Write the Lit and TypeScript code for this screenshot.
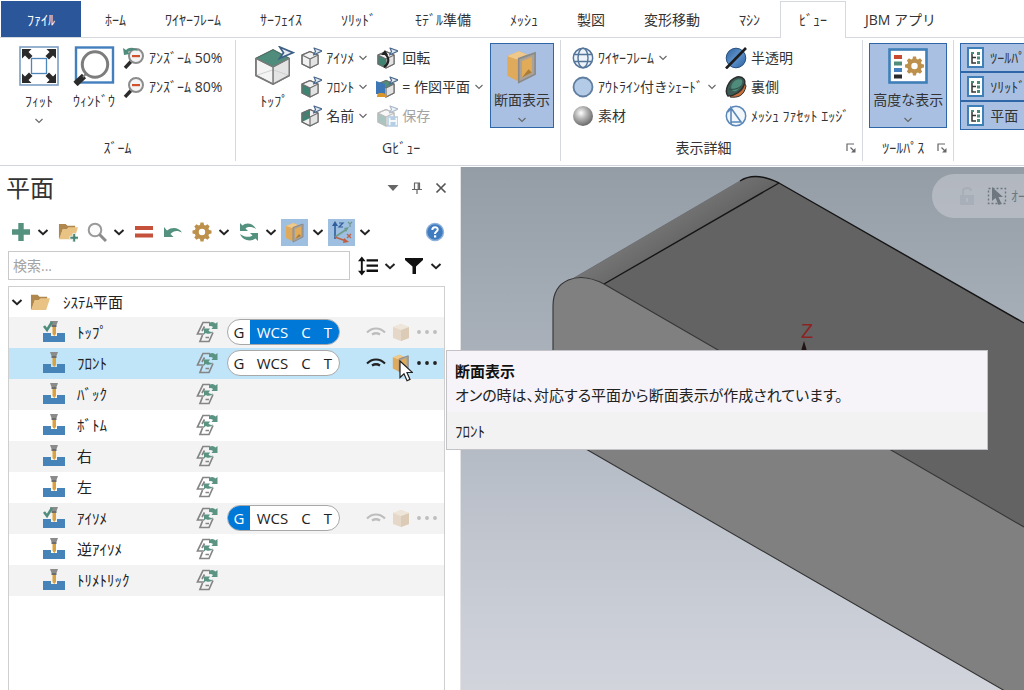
import { LitElement, html, css, svg, nothing } from "lit";
import { customElement, state } from "lit/decorators.js";
import { classMap } from "lit/directives/class-map.js";

type Face = "top" | "front" | "none" | "left";

/* Compact labels use half-width katakana (U+FF66 to U+FF9F). */
const KANA = "ヲァィゥェォャュョッーアイウエオカキクケコサシスセソタチツテトナニヌネノハヒフヘホマミムメモヤユヨラリルレロワン\u3099\u309a";

const half = (text: string) =>
  [...text.normalize("NFD")]
    .map((c) => {
      const i = KANA.indexOf(c);
      return i < 0 ? c : String.fromCharCode(0xff66 + i);
    })
    .join("");

/* ---------- icon drawings ---------- */

const cube = (face: Face) => svg`
  <path d="M2 8 L10 4.500 L18 8 V17 L10 21 L2 17Z" fill="#f1f1f1" stroke="#777" stroke-width="1.300" stroke-linejoin="round"/>
  <path d="M10 12 L18 8 V17 L10 21Z" fill="#e3e3e3"/>
  ${face === "top" ? svg`<path d="M2 8 L10 4.500 L18 8 L10 12Z" fill="#4f8c7c"/>` : nothing}
  ${face === "front" ? svg`<path d="M2 8 L10 12 V21 L2 17Z" fill="#3f8373"/>` : nothing}
  ${face === "left" ? svg`<path d="M2 8 L10 4.500 V13 L2 17Z" fill="#3f8373"/>` : nothing}
  <path d="M2 8 L10 12 L18 8 M10 12 V21 M2 8 V17 L10 21 L18 17 V8 L10 4.500Z" fill="none" stroke="#6d6d6d" stroke-width="1.200" stroke-linejoin="round"/>`;

const axisArrow = svg`<path d="M14 1 L22 4 L13.500 8 L15.500 4.500Z" fill="#dfe8f2" stroke="#49688c" stroke-width="1.200" stroke-linejoin="round"/>`;

const section = svg`
  <path d="M2 5 L9 2 L14 4 V17 L8 20 L2 17Z" fill="#dfaa5c"/>
  <path d="M2 5 L9 2 L14 4 L8 7Z" fill="#efc98b"/>
  <path d="M9 6.500 L19 3 V16 L9 21Z" fill="#a9a29a" stroke="#8b8a88"/>
  <path d="M11 8 L17 5.500 V15 L11 18Z" fill="#e2ab58"/>
  <path d="M11 18 L15 13 L17 15Z" fill="#a97c38"/>`;

const gearPath =
  "M8.500 .5h3l.5 2.400 1.500.7 2-1.300 2.200 2.200-1.300 2 .7 1.500 2.400.5v3l-2.400.5-.7 1.500 1.300 2-2.200 2.200-2-1.300-1.500.7-.5 2.400h-3l-.5-2.400-1.500-.7-2 1.300-2.200-2.200 1.300-2-.7-1.500L.5 11.500v-3l2.400-.5.7-1.500-1.300-2 2.200-2.200 2 1.300 1.500-.7zM10 6.800a3.200 3.200 0 1 0 0 6.400a3.200 3.200 0 1 0 0-6.400z";

const treeMini = svg`
  <rect x="2" y="1" width="15" height="19" fill="#fff" stroke="#3f7fb8" stroke-width="2"/>
  <path d="M6 6v10h4M6 10.500h4" fill="none" stroke="#333" stroke-width="1.500"/>
  <path d="M11 5h3v3h-3zM11 9.500h3v3h-3zM11 14h3v3h-3z" fill="#4a8a78"/>
  <path d="M5 5h3v2H5z" fill="#4a8a78"/>`;

const lens = svg`
  <path d="M2 21 L8 14.500" stroke="#2b2b2b" stroke-width="3.400"/>
  <circle cx="13" cy="9" r="7" fill="#f4f4f4" stroke="#8c8c8c" stroke-width="2"/>
  <rect x="9" y="8" width="8" height="2.200" fill="#d2512d"/>`;

const folder = svg`
  <path d="M1 2h7l2 2h8v4H5L2 17H1z" fill="#b0884e"/>
  <path d="M5 7.500h4l2-2h10l-4 12.500H1z" fill="#e9c383"/>`;

const drill = svg`
  <path d="M0 12h8v3h6v-3h8v9H0z" fill="#4683b9"/>
  <path d="M7 0h8l-1.500 4h-5z" fill="#8b8b8b"/>
  <path d="M8.500 4h5v2h-5z" fill="#6d6d6d"/>
  <path d="M9.500 6h3.500v7l-1.700 2-1.800-2z" fill="#d9a13f"/>`;

const ICONS: Record<string, { box: string; art: unknown }> = {
  fit: {
    box: "0 0 40 40",
    art: svg`
      <rect x="1" y="1" width="38" height="38" fill="#fff" stroke="#7d9fc2" stroke-width="1.600"/>
      <rect x="12.500" y="12.500" width="15" height="15" fill="#fff" stroke="#4e86bc" stroke-width="1.300"/>
      <path d="M3 3h9.500l-3 3 4 4-3.500 3.500-4-4-3 3zM37 3h-9.500l3 3-4 4 3.500 3.500 4-4 3 3zM3 37h9.500l-3-3 4-4-3.500-3.500-4 4-3-3zM37 37h-9.500l3-3-4-4 3.500-3.500 4 4 3-3z" fill="#2a2a2a"/>`,
  },
  window: {
    box: "0 0 42 40",
    art: svg`
      <rect x="3" y="1.500" width="37" height="35" fill="#fff" stroke="#437fbc" stroke-width="2.400"/>
      <path d="M2.500 38 L11 30" stroke="#2b2b2b" stroke-width="6"/>
      <path d="M10 31 L14 27" stroke="#888" stroke-width="2"/>
      <circle cx="22" cy="18.500" r="12.700" fill="#fff" stroke="#7d7d7d" stroke-width="3"/>`,
  },
  unzoomBack: { box: "0 0 22 22", art: svg`${lens}<path d="M0 1l1 7 6-1-2-2c3-2 7-2 10-1C12 0 6 0 3 3z" fill="#4f8c7c"/>` },
  unzoom: { box: "0 0 22 22", art: lens },
  topView: {
    box: "0 0 42 42",
    art: svg`
      <path d="M2 13 L20 4 L37 13 V31 L20 40 L2 31Z" fill="#f4f4f4" stroke="#777" stroke-width="1.600"/>
      <path d="M20 22 L37 13 V31 L20 40Z" fill="#e4e4e4"/>
      <path d="M2 31 L20 25 L37 31" fill="none" stroke="#cfcfcf"/>
      <path d="M2 13 L20 4 L37 13 L20 22Z" fill="#4f8c7c" stroke="#456e64"/>
      <path d="M2 13V31L20 40L37 31V13M20 22V40M2 13L20 22L37 13" fill="none" stroke="#7a7a7a" stroke-width="1.600"/>
      <path d="M27 1 L41 7 L27 13 L31 7Z" fill="#e7edf4" stroke="#3d5f86" stroke-width="1.800"/>`,
  },
  iso: { box: "0 0 22 22", art: svg`${cube("none")}${axisArrow}` },
  front: { box: "0 0 22 22", art: svg`${cube("front")}${axisArrow}` },
  named: { box: "0 0 22 22", art: svg`${cube("left")}${axisArrow}` },
  rotate: {
    box: "0 0 22 22",
    art: svg`${cube("front")}<path d="M8 20c5-3 6-9 1-13" fill="none" stroke="#222" stroke-width="2.200"/><path d="M5 8l4-5 3 5z" fill="#222"/>${axisArrow}`,
  },
  plane: {
    box: "0 0 22 22",
    art: svg`${cube("top")}<path d="M0 5l9 3v10H0z" fill="#3c76b4"/><path d="M1 21c0-4 2-4 4-4s5 0 6 4z" fill="#d8962c"/>${axisArrow}`,
  },
  save: {
    box: "0 0 22 22",
    art: svg`<g opacity=".45">${cube("front")}${axisArrow}<path d="M12 12h10v9H12z" fill="#e9f1f8" stroke="#5c93c4" stroke-width="1.500"/><path d="M14.500 12h5v3h-5zM14.500 17h5v4h-5z" fill="#5c93c4"/></g>`,
  },
  section: { box: "0 0 22 22", art: section },
  wire: {
    box: "0 0 22 22",
    art: svg`<circle cx="11" cy="11" r="9.700" fill="#edf3f9" stroke="#55759a" stroke-width="1.500"/>
      <ellipse cx="11" cy="11" rx="5" ry="9.700" fill="none" stroke="#55759a" stroke-width="1.400"/>
      <path d="M2 7.500h18M2 14.500h18" stroke="#55759a" stroke-width="1.400"/>`,
  },
  shade: { box: "0 0 22 22", art: svg`<circle cx="11" cy="11" r="9.500" fill="#b3cbe6" stroke="#5f7ea0" stroke-width="1.800"/>` },
  material: {
    box: "0 0 22 22",
    art: svg`<defs><radialGradient id="ball" cx=".4" cy=".35" r=".65"><stop offset="0" stop-color="#fff"/><stop offset=".45" stop-color="#b5b5b5"/><stop offset="1" stop-color="#6b6b6b"/></radialGradient></defs><circle cx="11" cy="11" r="10" fill="url(#ball)"/>`,
  },
  translucent: {
    box: "0 0 22 22",
    art: svg`<defs><linearGradient id="blue" x1="0" y1="0" x2="1" y2="1"><stop offset="0" stop-color="#2c5f9c"/><stop offset=".5" stop-color="#5f93cc"/><stop offset="1" stop-color="#28609f"/></linearGradient></defs>
      <circle cx="11" cy="11" r="9.800" fill="url(#blue)" stroke="#244f80"/><path d="M1 21.500L21 1" stroke="#1c1c1c" stroke-width="2.600"/>`,
  },
  back: {
    box: "0 0 22 22",
    art: svg`<path d="M5 21c8 1 14-1 16-11l-3-6z" fill="#c8703a" stroke="#333"/>
      <path d="M3 20C-1 15 3 4 12 1c7-1 9 4 7 8-2 6-9 11-16 11z" fill="#3b5b54" stroke="#2d2d2d" stroke-width="1.500"/>
      <path d="M7 8c2-4 7-6 10-4 1 3-2 9-6 11-4 1-6-2-4-7z" fill="#4f8c7c"/><path d="M4 13c4 1 9 0 12-3" fill="none" stroke="#2b4841"/>`,
  },
  facet: {
    box: "0 0 22 22",
    art: svg`<circle cx="11" cy="11" r="9.700" fill="#f2f7fc" stroke="#5a87b8" stroke-width="1.500"/><path d="M6 19V3L16 17H6M6 3L3 7" fill="none" stroke="#5a87b8" stroke-width="1.600"/>`,
  },
  advanced: {
    box: "0 0 40 36",
    art: svg`<rect x="1.500" y="1.500" width="37" height="33" fill="#fff" stroke="#3f7fb8" stroke-width="2.600"/>
      <path d="M6 7h8v4H6z" fill="#c94a2c"/><path d="M6 13.500h8v4H6z" fill="#4f8c7c"/><path d="M6 20h8v4H6z" fill="#437fbc"/><path d="M6 26.500h8v4H6z" fill="#2b2b2b"/>
      <path d="${gearPath}" fill="#bd904b" fill-rule="evenodd" transform="translate(16.500 8)"/>`,
  },
  tree: { box: "0 0 19 21", art: treeMini },
  launcher: { box: "0 0 10 10", art: svg`<path d="M1 8V1h7M4.500 4.500l4 4" fill="none" stroke="#666" stroke-width="1.200"/><path d="M9.500 5v4.500H5z" fill="#666"/>` },
  plus: { box: "0 0 20 20", art: svg`<path d="M7.300 1h5.400v6.300H19v5.400h-6.300V19H7.300v-6.300H1V7.300h6.300z" fill="#55917f"/>` },
  newFolder: { box: "0 0 21 21", art: svg`${folder}<path d="M15.500 12h3v3h3v3h-3v3h-3v-3h-3v-3h3z" fill="#4a8675" stroke="#fff" stroke-width=".8"/>` },
  folder: { box: "0 0 21 19", art: folder },
  find: { box: "0 0 20 20", art: svg`<circle cx="8" cy="8" r="6.300" fill="#fbfbfb" stroke="#9a9a9a" stroke-width="2"/><path d="M12.500 12.500L19 19" stroke="#8a8a8a" stroke-width="3"/>` },
  equal: { box: "0 0 20 20", art: svg`<path d="M1 4h18v4H1zM1 11.500h18v4H1z" fill="#c5513a"/>` },
  undo: { box: "0 0 20 20", art: svg`<path d="M1 5v10h9.500L7.500 12c3-3.500 7-4 11.500-1.500C16 5.500 9 4.500 4 8.500z" fill="#55917f"/>` },
  gear: { box: "0 0 20 20", art: svg`<path d="${gearPath}" fill="#bd904b" fill-rule="evenodd"/>` },
  sync: {
    box: "0 0 20 20",
    art: svg`<path d="M1 1v8h8L6.500 6.500C9 4.500 13 4.500 17 7 14 1 7 0 3.500 3.500zM19 19v-8h-8l2.500 2.500C11 15.500 6 15.500 1 12c3 7 11 8 15.500 4.500z" fill="#55917f"/>`,
  },
  axes: {
    box: "0 0 22 22",
    art: svg`<path d="M4 18V3" stroke="#2f5f9c" stroke-width="1.600"/><path d="M4 0l3 5H1z" fill="#2f5f9c"/>
      <path d="M4 16L16 8" stroke="#6f9b8d" stroke-width="1.600"/><path d="M13 7l5-1-3 5z" fill="#6f9b8d"/>
      <path d="M4 16l11 4" stroke="#bf6044" stroke-width="1.600"/><path d="M13 17l5 4-6 1z" fill="#bf6044"/>
      <path d="M8 2h4L8 6h4" fill="none" stroke="#2f5f9c" stroke-width="1.200"/>
      <path d="M17 1l2 2 2-2M19 3v3" fill="none" stroke="#6f9b8d" stroke-width="1.200"/>
      <path d="M16 13l4 4M20 13l-4 4" fill="none" stroke="#bf6044" stroke-width="1.200"/>`,
  },
  help: {
    box: "0 0 20 20",
    art: svg`<circle cx="10" cy="10" r="8.500" fill="#3f7cbf" stroke="#8fb2da" stroke-width="1.400"/><path d="M7.300 8c0-3.800 5.600-3.600 5.400-.3C12.600 9.600 10 9.700 10 12" fill="none" stroke="#fff" stroke-width="2"/><rect x="9" y="13.300" width="2.200" height="2.200" fill="#fff"/>`,
  },
  sort: {
    box: "0 0 21 20",
    art: svg`<path d="M4 3v14" stroke="#111" stroke-width="2"/><path d="M4 0l4 5H0zM4 20l4-5H0z" fill="#111"/><path d="M9 4h12M9 9.500h12M9 15h12" stroke="#111" stroke-width="2.400"/>`,
  },
  filter: { box: "0 0 20 18", art: svg`<path d="M1 1h18v2l-7 6.500V17H8.500V9.500L1 3z" fill="#111"/>` },
  caret: { box: "0 0 12 12", art: svg`<path d="M0.500 3h11L6 9z" fill="#666"/>` },
  pin: { box: "0 0 12 12", art: svg`<path d="M3 1h6M3.500 1v6M8.500 1v6M7.200 1v6M1 7.500h10M6 7.500V12" fill="none" stroke="#666" stroke-width="1.200"/>` },
  close: { box: "0 0 12 12", art: svg`<path d="M1.500 1.500l9 9M10.500 1.500l-9 9" stroke="#555" stroke-width="1.700"/>` },
  chev: { box: "0 0 8 8", art: svg`<path d="M.5 2L4 5.500 7.500 2" fill="none" stroke="#666" stroke-width="1.100"/>` },
  chevBold: { box: "0 0 12 12", art: svg`<path d="M1.500 4L6 8.200 10.500 4" fill="none" stroke="#222" stroke-width="2"/>` },
  drill: { box: "0 0 22 22", art: drill },
  drillOk: { box: "0 0 22 22", art: svg`${drill}<path d="M1 5l3 4 5-8" fill="none" stroke="#4f8c7c" stroke-width="2.600"/>` },
  assoc: {
    box: "0 0 22 22",
    art: svg`<path d="M14 1.500H7L1.500 13H8M4.500 13M8.500 5.500L6 10M6.500 14L4 20.500H13L17 11.500M9.500 16.500H13" fill="none" stroke="#858585" stroke-width="1.700"/>
      <path d="M13 2c3-2 5-1 6.500.5L21.500 1v7h-6l1.500-2c-1-.9-2.500-1-4-.8zM8 7.500v6l1.800-1.500c2.500 1.500 5.500 1 7.200-1.400-2 .6-3.500.2-4.500-.9L14 7.500z" fill="#5c9484"/>`,
  },
  eye: { box: "0 0 20 12", art: svg`<path d="M1 6.500C6 1 14 1 19 6.500" fill="none" stroke="currentColor" stroke-width="2"/><path d="M6 8.500c3-1.800 5-1.800 8 0" fill="none" stroke="currentColor" stroke-width="2.400"/>` },
  box: { box: "0 0 20 20", art: svg`<path d="M2 5l8-3 8 3v11l-8 3-8-3z" fill="#e5d8c8"/><path d="M10 8l8-3v11l-8 3z" fill="#dccbb6"/><path d="M2 5l8-3 8 3-8 3z" fill="#eee6db"/>` },
  dots: { box: "0 0 22 6", art: svg`<circle cx="3" cy="3" r="1.900" fill="currentColor"/><circle cx="11" cy="3" r="1.900" fill="currentColor"/><circle cx="19" cy="3" r="1.900" fill="currentColor"/>` },
  lock: { box: "0 0 18 20", art: svg`<path d="M2 9h14v10H2z" fill="#98a0aa"/><path d="M5 9V5c0-4 8-4 8 0" fill="none" stroke="#98a0aa" stroke-width="2"/><path d="M8 12h2v4H8z" fill="#b4bac3"/>` },
  pick: { box: "0 0 20 20", art: svg`<rect x="1.500" y="2.500" width="17" height="15" fill="none" stroke="#6e7780" stroke-width="1.400" stroke-dasharray="2 2"/><path d="M5 1v14l3.500-3 3 7 3-1.300-3-6.700H16z" fill="#6e7780"/>` },
  cursor: { box: "0 0 14 22", art: svg`<path d="M1 1v16.500l4-3.800 3 7 3-1.300-3-6.900h5.500z" fill="#fff" stroke="#222" stroke-width="1.200"/>` },
};

const icon = (name: string, cls = "i22") =>
  html`<svg class=${cls} viewBox=${ICONS[name].box} aria-hidden="true">${ICONS[name].art}</svg>`;

/* ---------- data ---------- */

const TABS = [
  ...["ホーム", "ワイヤーフレーム", "サーフェイス", "ソリッド", "モデル準備", "メッシュ", "製図", "変形移動", "マシン", "ビュー"].map(half),
  "JBM アプリ",
];

interface Plane {
  name: string;
  active?: boolean;
  marks?: string[];
}

const PLANES: Plane[] = [
  { name: half("トップ"), active: true, marks: ["WCS", "C", "T"] },
  { name: half("フロント"), marks: [] },
  { name: half("バック") },
  { name: half("ボトム") },
  { name: "右" },
  { name: "左" },
  { name: half("アイソメ"), active: true, marks: ["G"] },
  { name: half("逆アイソメ") },
  { name: half("トリメトリック") },
];

const base = css`
  * { box-sizing: border-box; }
  :host { font-family: "Open Sans", "Noto Sans CJK JP", sans-serif; font-size: 14px; line-height: 20px; color: #333; }
  button, input { font: inherit; color: inherit; background: none; border: 0; padding: 0; margin: 0; }
  button { display: flex; align-items: center; white-space: nowrap; }
  svg { display: block; flex: none; }
  .i8 { width: 8px; height: 8px; }
  .i10 { width: 10px; height: 10px; }
  .i12 { width: 12px; height: 12px; }
  .i20 { width: 20px; height: 20px; }
  .i22 { width: 22px; height: 22px; }
  .i40 { width: 42px; height: 40px; }
`;

/* ---------- ribbon ---------- */

@customElement("cad-ribbon")
export class CadRibbon extends LitElement {
  @state() private current = half("ビュー");

  static styles = [
    base,
    css`
      :host { display: block; background: #fff; overflow: hidden; border-bottom: 1px solid #d2d6da; }
      .tabs { display: flex; height: 38px; padding-top: 1px; box-shadow: inset 0 -1px #d5d8dc; }
      .tab { flex: none; padding: 0 20px 0 19px; border: 1px solid transparent; border-width: 1px 0 0; }
      .tab.file { background: #2b579a; color: #fff; padding: 0 26px; margin: 0 5px 1px 1px; }
      .tab.on { background: #fff; border: 1px solid #d5d8dc; border-bottom: 0; padding: 0 18px; }
      .body { display: flex; padding: 2px 0 4px; }
      .group { flex: none; display: flex; flex-direction: column; border-right: 1px solid #d5d8dc; padding: 3px 6px 0; }
      .group:last-child { border: 0; }
      .zoom { padding: 3px 13px 0 13px; }
      .gview { padding-left: 12px; }
      .detail { padding: 3px 13px 0 11px; }
      .items { display: flex; height: 87px; }
      .caption { display: flex; align-items: center; height: 31px; padding-top: 5px; }
      .detail .caption { margin: 0 -7px 0 -11px; }
      .caption span { flex: 1; text-align: center; }
      .big { flex-direction: column; align-self: flex-start; height: 85px; padding-top: 3px; gap: 5px; }
      .big.narrow { width: 52px; }
      .big.wide { width: 58px; }
      .big.lit { background: #a9c0e2; border: 1px solid #2f66a8; padding: 3px 3px 0; }
      .big .i8 { margin-top: 1px; }
      .i36 { width: 36px; height: 38px; }
      .adv { width: 40px; height: 36px; margin: 1px 0; }
      .col { display: grid; grid-auto-rows: 29px; justify-items: start; }
      .col.gap { margin-right: 9px; }
      .col.tail { margin-right: 7px; }
      .row { gap: 4px; }
      .row .i8 { margin-left: 1px; }
      .row:disabled { color: #a3a3a3; }
      .panel { width: 110px; height: 29px; gap: 5px; padding-left: 5px; background: #a9c0e2; border: 1px solid #2f66a8; }
      .i19 { width: 19px; height: 21px; }
    `,
  ];

  private row(name: string, label: string, drop = false, disabled = false) {
    return html`<button class="row" ?disabled=${disabled}>${icon(name)}<span>${half(label)}</span>${drop ? icon("chev", "i8") : nothing}</button>`;
  }

  render() {
    return html`
      <nav class="tabs">
        <button class="tab file">${half("ファイル")}</button>
        ${TABS.map(
          (t) => html`<button class=${classMap({ tab: true, on: t === this.current })} @click=${() => (this.current = t)}>${t}</button>`
        )}
      </nav>
      <div class="body">
        <section class="group zoom">
          <div class="items">
            <button class="big narrow">${icon("fit", "i40")}<span>${half("フィット")}</span>${icon("chev", "i8")}</button>
            <button class="big wide">${icon("window", "i40")}<span>${half("ウィンドウ")}</span></button>
            <div class="col">${this.row("unzoomBack", "アンズーム 50%")}${this.row("unzoom", "アンズーム 80%")}</div>
          </div>
          <div class="caption"><span>${half("ズーム")}</span></div>
        </section>
        <section class="group gview">
          <div class="items">
            <button class="big narrow">${icon("topView", "i40")}<span>${half("トップ")}</span></button>
            <div class="col gap">${this.row("iso", "アイソメ", true)}${this.row("front", "フロント", true)}${this.row("named", "名前", true)}</div>
            <div class="col tail">${this.row("rotate", "回転")}${this.row("plane", "= 作図平面", true)}${this.row("save", "保存", false, true)}</div>
            <button class="big lit" aria-pressed="true">${icon("section", "i36")}<span>断面表示</span>${icon("chev", "i8")}</button>
          </div>
          <div class="caption"><span>${half("Gビュー")}</span></div>
        </section>
        <section class="group detail">
          <div class="items">
            <div class="col gap">${this.row("wire", "ワイヤーフレーム", true)}${this.row("shade", "アウトライン付きシェード", true)}${this.row("material", "素材")}</div>
            <div class="col">${this.row("translucent", "半透明")}${this.row("back", "裏側")}${this.row("facet", "メッシュ ファセット エッジ")}</div>
          </div>
          <div class="caption"><span>表示詳細</span><button aria-label="表示詳細">${icon("launcher", "i10")}</button></div>
        </section>
        <section class="group">
          <div class="items">
            <button class="big lit" aria-pressed="true">${icon("advanced", "adv")}<span>高度な表示</span>${icon("chev", "i8")}</button>
          </div>
          <div class="caption"><span>${half("ツールパス")}</span><button aria-label="ツールパス">${icon("launcher", "i10")}</button></div>
        </section>
        <section class="group">
          <div class="col">
            ${["ツールパス", "ソリッド", "平面"].map((t) => html`<button class="panel" aria-pressed="true">${icon("tree", "i19")}<span>${half(t)}</span></button>`)}
          </div>
        </section>
      </div>
    `;
  }
}

/* ---------- planes panel ---------- */

@customElement("planes-panel")
export class PlanesPanel extends LitElement {
  @state() private selected = half("フロント");

  static styles = [
    base,
    css`
      :host { display: flex; flex-direction: column; background: #fff; padding: 0 15px 0 8px; border-right: 1px solid #e3e3e3; min-width: 0; color: #222; }
      .head { display: flex; align-items: center; height: 42px; gap: 12px; margin: 0 -2px; }
      .title { flex: 1; margin: 0; font-size: 24px; font-weight: 400; line-height: 32px; color: #333; }
      .tools { display: flex; align-items: center; height: 42px; gap: 4px; padding: 4px 0 0 3px; }
      .main { display: flex; align-items: center; gap: 9px; }
      .split { display: flex; align-items: center; gap: 6px; }
      .split.tight { gap: 4px; }
      .toggle { background: #9ebfdf; width: 27px; height: 27px; justify-content: center; }
      .push { margin-left: auto; }
      .search { display: flex; align-items: center; gap: 8px; height: 29px; margin-right: 3px; }
      .search input { flex: 1; min-width: 0; height: 29px; border: 1px solid #c9c9c9; padding: 0 4px; font-size: 14px; }
      .search input::placeholder { color: #a3a3a3; opacity: 1; }
      .tree { flex: 1; border: 1px solid #cfcfcf; border-bottom: 0; margin: 6px 0 0; padding: 0; list-style: none; font-size: 15px; }
      .root { display: flex; align-items: center; height: 30px; padding: 0 0 1px 2px; gap: 7px; }
      .root span { margin-left: 6px; }
      .items { list-style: none; margin: 0; padding: 0; }
      .row { display: grid; grid-template-columns: 34px minmax(0, 1fr) 31px 113px 104px; align-items: center; height: 31px; padding: 0 0 1px 34px; }
      .row:nth-child(odd) { background: #f3f3f3; }
      .row.sel { background: #c0e5f9; }
      .pill { display: flex; height: 26px; border: 1px solid #a8a8a8; border-radius: 13px; background: #fff; overflow: hidden; }
      .pill button { justify-content: center; flex: 1 1 22px; color: #222; }
      .pill .w { flex-grow: 0; flex-basis: 45px; }
      .pill .on { background: #0078d7; color: #fff; }
      .acts { display: flex; align-items: center; gap: 5px; justify-content: flex-end; padding-right: 6px; color: #bdbdbd; }
      .sel .acts { color: #222; }
      .eye { width: 20px; height: 12px; }
      .dots { width: 22px; height: 6px; }
    `,
  ];

  private split(name: string, label: string) {
    return html`<div class="split"><button aria-label=${label}>${icon(name, "i20")}</button><button aria-label=${label}>${icon("chevBold", "i12")}</button></div>`;
  }

  private toggle(name: string, label: string) {
    return html`<div class="split tight"><button class="toggle" aria-pressed="true" aria-label=${label}>${icon(name)}</button><button aria-label=${label}>${icon("chevBold", "i12")}</button></div>`;
  }

  private plane(p: Plane) {
    const sel = p.name === this.selected;
    return html`<li class=${classMap({ row: true, sel })} @click=${() => (this.selected = p.name)}>
      ${icon(p.active ? "drillOk" : "drill")}
      <span>${p.name}</span>
      ${icon("assoc")}
      ${p.marks
        ? html`<div class="pill">
              ${["G", "WCS", "C", "T"].map((m) => html`<button class=${classMap({ w: m === "WCS", on: p.marks!.includes(m) })}>${m}</button>`)}
            </div>
            <div class="acts">
              <button aria-label="表示">${icon("eye", "eye")}</button>
              <button aria-label="断面表示">${icon(sel ? "section" : "box", "i20")}</button>
              <button aria-label="その他">${icon("dots", "dots")}</button>
            </div>`
        : nothing}
    </li>`;
  }

  render() {
    return html`
      <header class="head">
        <h1 class="title">平面</h1>
        <button aria-label="メニュー">${icon("caret", "i12")}</button>
        <button aria-label="固定">${icon("pin", "i12")}</button>
        <button aria-label="閉じる">${icon("close", "i12")}</button>
      </header>
      <div class="tools">
        <div class="main">
          ${this.split("plus", "新規平面")}
          <button aria-label="新規フォルダ">${icon("newFolder", "i20")}</button>
          ${this.split("find", "平面を検索")}
          <button aria-label="等しく設定">${icon("equal", "i20")}</button>
          <button aria-label="リセット">${icon("undo", "i20")}</button>
          ${this.split("gear", "設定")} ${this.split("sync", "更新")}
        </div>
        ${this.toggle("section", "断面表示")} ${this.toggle("axes", "軸表示")}
        <button class="push" aria-label="ヘルプ">${icon("help", "i20")}</button>
      </div>
      <div class="search">
        <input type="text" placeholder="検索..." aria-label="検索" />
        ${this.split("sort", "並べ替え")} ${this.split("filter", "フィルタ")}
      </div>
      <ul class="tree">
        <li>
          <div class="root">${icon("chevBold", "i12")}${icon("folder", "i20")}<span>${half("システム平面")}</span></div>
          <ul class="items">${PLANES.map((p) => this.plane(p))}</ul>
        </li>
      </ul>
    `;
  }
}

/* ---------- graphics view ---------- */

@customElement("graphics-view")
export class GraphicsView extends LitElement {
  static styles = [
    base,
    css`
      :host { display: block; position: relative; overflow: hidden; min-width: 0; background: linear-gradient(#949da5, #a3abb5 25%, #b5bbc5 54%, #c5cad2 78%, #d2d4dc); }
      .scene { position: absolute; inset: 0; width: 100%; height: 100%; }
      .z { font: 20px "Liberation Sans", sans-serif; fill: #8c2422; }
      .bar { position: absolute; top: 7px; right: 0; display: flex; align-items: center; gap: 11px; width: 92px; height: 44px; padding-left: 26px; border-radius: 22px 0 0 22px; background: rgba(207, 210, 218, 0.5); overflow: hidden; white-space: nowrap; color: #6e7780; }
      .lock { width: 18px; height: 20px; opacity: 0.4; }
      .bar button { gap: 4px; }
    `,
  ];

  render() {
    return html`
      <svg class="scene" viewBox="461 167 563 523" preserveAspectRatio="xMinYMin slice" role="img" aria-label="モデル">
        <defs>
          <linearGradient id="fillet" gradientUnits="userSpaceOnUse" x1="650" y1="226" x2="672" y2="260">
            <stop offset="0" stop-color="#767676" />
            <stop offset="1" stop-color="#616161" />
          </linearGradient>
        </defs>
        <path d="M604 284L779 183L1024 323V527Z" fill="#636363" />
        <path d="M574 278L740 181Q755 171 779 183L604 284Q588 275 574 278Z" fill="url(#fillet)" />
        <path d="M553 430V306C553 280 577 270 604 284L1024 527V702Z" fill="#808080" />
        <path d="M574 278L740 181" stroke="#6d7073" fill="none" />
        <path d="M740 181Q755 171 779 183L1024 323M779 183L604 284" fill="none" stroke="#151515" stroke-width="1.400" />
        <path d="M553 430V306C553 280 577 270 604 284L1024 527M553 430L1024 702" fill="none" stroke="#333" stroke-width="1.100" />
        <path d="M804 341l3 10h-6z" fill="#201414" />
        <text class="z" x="801" y="338">Z</text>
      </svg>
      <div class="bar">
        ${icon("lock", "lock")}
        <button>${icon("pick", "i20")}<span>${half("オート")}</span></button>
      </div>
    `;
  }
}

/* ---------- application ---------- */

@customElement("app-root")
export class AppRoot extends LitElement {
  static styles = [
    base,
    css`
      :host { display: flex; flex-direction: column; position: relative; height: 100vh; overflow: hidden; background: #fff; }
      .work { flex: 1; min-height: 0; display: grid; grid-template-columns: minmax(0, 461px) minmax(0, 1fr); padding-top: 1px; }
      .tip { position: absolute; left: 446px; top: 350px; width: 542px; border: 1px solid #c3c3c7; background: #f7f4f9; color: #222; font-size: 15px; line-height: 24px; }
      .tip-main { padding: 8px 8px 5px; }
      .tip-title { font-weight: 700; margin: 0; color: #111; }
      .tip-text { margin: 0; font-feature-settings: "palt"; }
      .tip-foot { padding: 7px 8px 6px; background: #f2f2f2; }
      .cursor { position: absolute; left: 399px; top: 360px; width: 14px; height: 22px; }
    `,
  ];

  render() {
    return html`
      <cad-ribbon></cad-ribbon>
      <main class="work">
        <planes-panel></planes-panel>
        <graphics-view></graphics-view>
      </main>
      <div class="tip" role="tooltip">
        <div class="tip-main">
          <p class="tip-title">断面表示</p>
          <p class="tip-text">オンの時は、対応する平面から断面表示が作成されています。</p>
        </div>
        <div class="tip-foot">${half("フロント")}</div>
      </div>
      ${icon("cursor", "cursor")}
    `;
  }
}
